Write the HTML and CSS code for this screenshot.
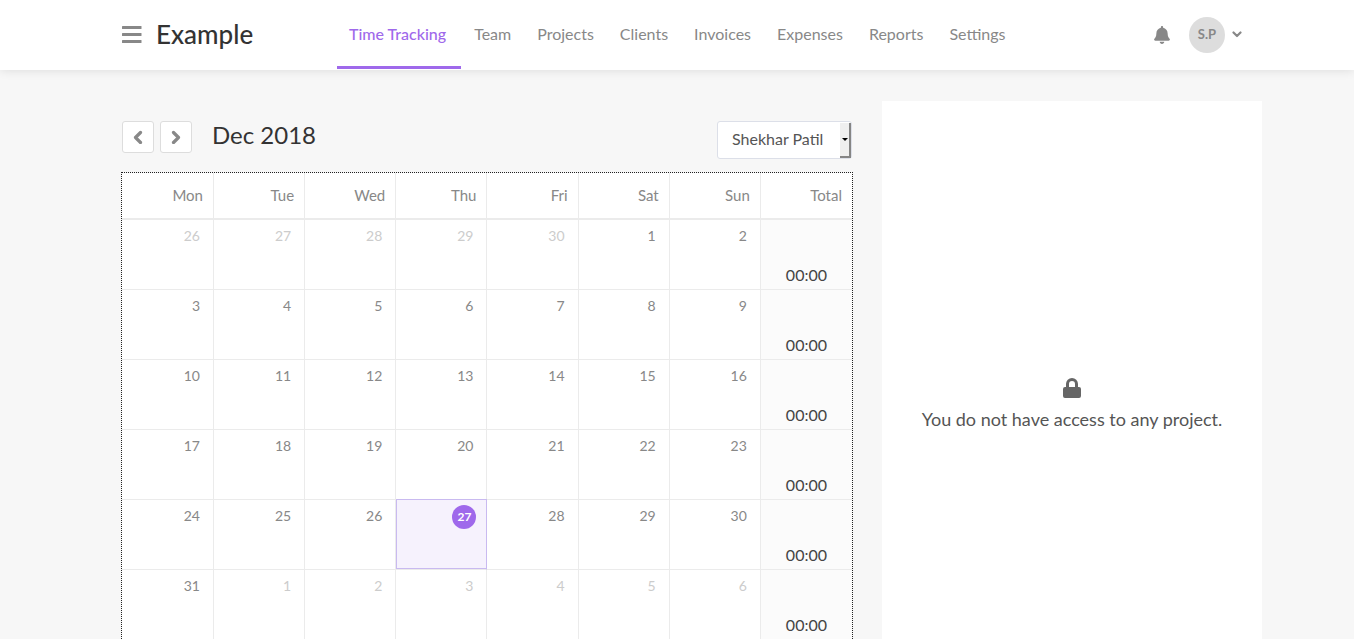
FILE: index.html
```html
<!DOCTYPE html>
<html lang="en">
<head>
<meta charset="utf-8">
<meta name="viewport" content="width=device-width, initial-scale=1">
<title>Time Tracking</title>
<link rel="stylesheet" href="styles.css">
</head>
<body>
<header class="topbar">
  <div class="container topbar-inner">
    <button class="icon-button menu-button" type="button" aria-label="Menu">
      <svg width="20" height="18" viewBox="0 0 20 18" fill="currentColor"><rect y="0" width="19.500" height="3" rx="0.5"/><rect y="7" width="19.500" height="3" rx="0.5"/><rect y="14" width="19.500" height="3" rx="0.5"/></svg>
    </button>
    <a class="brand" href="#">Example</a>
    <nav class="nav">
      <a class="nav-link active" href="#">Time Tracking</a>
      <a class="nav-link" href="#">Team</a>
      <a class="nav-link" href="#">Projects</a>
      <a class="nav-link" href="#">Clients</a>
      <a class="nav-link" href="#">Invoices</a>
      <a class="nav-link" href="#">Expenses</a>
      <a class="nav-link" href="#">Reports</a>
      <a class="nav-link" href="#">Settings</a>
    </nav>
    <button class="icon-button bell" type="button" aria-label="Notifications">
      <svg width="16" height="18" viewBox="0 0 448 512" fill="currentColor"><path d="M224 512c35.300 0 63.900-28.600 63.900-64H160.100c0 35.400 28.600 64 63.900 64zm215.400-149.700c-19.300-20.800-55.500-52-55.500-154.300 0-77.700-54.500-139.900-127.900-155.200V32c0-17.700-14.300-32-32-32s-32 14.300-32 32v20.800C118.600 68.100 64.100 130.300 64.100 208c0 102.300-36.200 133.500-55.500 154.300-6 6.500-8.700 14.200-8.600 21.700.1 16.400 13 32 32.100 32h383.800c19.100 0 32-15.600 32.100-32 .1-7.500-2.600-15.300-8.600-21.700z"/></svg>
    </button>
    <button class="icon-button profile" type="button" aria-label="Account">
      <span class="avatar">S.P</span>
      <svg width="10" height="8" viewBox="0 0 10 8" fill="none" stroke="currentColor" stroke-width="2.200" stroke-linecap="round" stroke-linejoin="round"><path d="M1.500 1.500 5 5 8.500 1.500"/></svg>
    </button>
  </div>
</header>
<main class="content">
  <div class="container columns">
    <section class="calendar-column">
      <div class="toolbar">
        <button class="step" type="button" aria-label="Previous month">
          <svg width="10" height="14" viewBox="0 0 10 14" fill="none" stroke="currentColor" stroke-width="3.200" stroke-linecap="round" stroke-linejoin="round"><path d="M7.500 2.500 2.500 7.500l5 5"/></svg>
        </button>
        <button class="step" type="button" aria-label="Next month">
          <svg width="10" height="14" viewBox="0 0 10 14" fill="none" stroke="currentColor" stroke-width="3.200" stroke-linecap="round" stroke-linejoin="round"><path d="M2.500 2.500l5 5-5 5"/></svg>
        </button>
        <h1 class="month">Dec 2018</h1>
        <div class="user-picker">
          <select class="user-select" aria-label="Team member"><option>Shekhar Patil</option></select>
          <span class="user-arrow" aria-hidden="true"></span>
        </div>
      </div>
      <table class="calendar">
        <thead>
          <tr><th class="first-day">Mon</th><th>Tue</th><th>Wed</th><th>Thu</th><th>Fri</th><th>Sat</th><th>Sun</th><th>Total</th></tr>
        </thead>
        <tbody>
          <tr><td class="other">26</td><td class="other">27</td><td class="other">28</td><td class="other">29</td><td class="other">30</td><td>1</td><td>2</td><td class="total">00:00</td></tr>
          <tr><td>3</td><td>4</td><td>5</td><td>6</td><td>7</td><td>8</td><td>9</td><td class="total">00:00</td></tr>
          <tr><td>10</td><td>11</td><td>12</td><td>13</td><td>14</td><td>15</td><td>16</td><td class="total">00:00</td></tr>
          <tr><td>17</td><td>18</td><td>19</td><td>20</td><td>21</td><td>22</td><td>23</td><td class="total">00:00</td></tr>
          <tr><td>24</td><td>25</td><td>26</td><td class="today"><span class="today-badge">27</span></td><td>28</td><td>29</td><td>30</td><td class="total">00:00</td></tr>
          <tr><td>31</td><td class="other">1</td><td class="other">2</td><td class="other">3</td><td class="other">4</td><td class="other">5</td><td class="other">6</td><td class="total">00:00</td></tr>
        </tbody>
      </table>
    </section>
    <aside class="panel">
      <svg width="18" height="20" viewBox="0 0 18 20" fill="currentColor"><path fill-rule="evenodd" d="M3 9V6a6 6 0 0 1 12 0v3h1a2 2 0 0 1 2 2v7a2 2 0 0 1-2 2H2a2 2 0 0 1-2-2v-7a2 2 0 0 1 2-2zm3 0h6V6a3 3 0 0 0-6 0z"/></svg>
      <p class="panel-text">You do not have access to any project.</p>
    </aside>
  </div>
</main>
</body>
</html>
```
FILE: styles.css
```css
* { box-sizing: border-box; }

body {
  margin: 0;
  height: 100vh;
  display: flex;
  flex-direction: column;
  background: #f7f7f7;
  color: #888;
  font: 16px/24px Lato, "Open Sans", sans-serif;
}

a { color: inherit; text-decoration: none; }
svg { display: block; flex: none; }

.container {
  width: 100%;
  max-width: 1170px;
  margin: 0 auto;
  padding-left: 30px;
}

.topbar {
  position: relative;
  flex: none;
  background: #fff;
  box-shadow: 0 0 10px rgba(0, 0, 0, 0.12);
}

.topbar-inner {
  display: flex;
  align-items: center;
  height: 70px;
  padding-right: 20px;
}

.icon-button {
  display: flex;
  align-items: center;
  padding: 0;
  border: 0;
  background: none;
  color: #888;
  font: inherit;
  cursor: pointer;
}

.brand {
  width: 181px;
  margin-left: 14px;
  padding-bottom: 2px;
  color: #333;
  font-size: 26px;
  font-weight: 500;
}

.nav { display: flex; align-self: stretch; }

.nav-link {
  display: flex;
  align-items: center;
  margin-bottom: 1px;
  padding: 1px 13px 0;
  border-bottom: 3px solid transparent;
}

.nav-link.active {
  padding: 1px 15px 0 12px;
  border-color: #9f69eb;
  color: #9f69eb;
  font-weight: 500;
}

.bell { margin-left: auto; }
.profile { gap: 7px; margin-left: 19px; }

.avatar {
  width: 36px;
  height: 36px;
  padding-bottom: 2px;
  border-radius: 50%;
  background: #ddd;
  font-size: 13px;
  font-weight: 700;
  line-height: 34px;
  text-align: center;
}

.content {
  flex: 1;
  min-height: 0;
  overflow-y: auto;
  scrollbar-width: none;
}

.columns {
  display: grid;
  grid-template-columns: minmax(0, 730fr) minmax(0, 380fr);
  gap: 30px;
  padding-top: 31px;
}

.calendar-column { padding-top: 20px; }

.toolbar {
  display: flex;
  align-items: flex-start;
  gap: 6px;
  margin-bottom: 14px;
}

.step {
  display: grid;
  place-items: center;
  width: 32px;
  height: 32px;
  padding: 0;
  border: 1px solid #ddd;
  border-radius: 3px;
  background: #fff;
  color: #888;
}

.month {
  margin: 0 auto 0 14px;
  color: #333;
  font-size: 24px;
  font-weight: 400;
  line-height: 28px;
}

.user-picker { position: relative; }

.user-select {
  display: block;
  width: 135px;
  height: 38px;
  padding: 0 14px 2px;
  border: 1px solid #dcdfe8;
  border-radius: 3px;
  appearance: none;
  background: #fff;
  color: #555;
  font: inherit;
}

.user-arrow {
  position: absolute;
  top: 2px;
  right: 1px;
  bottom: 1px;
  display: grid;
  place-items: center;
  width: 11px;
  border-right: 2px solid #858585;
  border-bottom: 2px solid #858585;
  background: #efefef;
  pointer-events: none;
}

.user-arrow::before {
  content: "";
  border: 3px solid transparent;
  border-top-color: #000;
  border-bottom: 0;
}

.calendar {
  width: 100%;
  table-layout: fixed;
  border-spacing: 0;
  outline: 1px dotted #222;
  background: #fff;
}

.calendar th,
.calendar td {
  border-right: 1px solid #ebebeb;
  text-align: right;
}

.calendar tr > :last-child { border-right: 0; }

.calendar th {
  height: 47px;
  padding: 0 10px 1px 0;
  border-bottom: 2px solid #ebebeb;
  font-size: 15px;
  font-weight: 400;
}

.calendar .first-day { width: 92px; }

.calendar td {
  height: 70px;
  padding: 4px 13px 0 0;
  border-bottom: 1px solid #ebebeb;
  font-size: 14px;
  vertical-align: top;
}

.calendar .other { color: #ccc; }

.calendar .total {
  padding: 0 0 2px;
  background: #fbfbfb;
  color: #444;
  font-size: 16px;
  text-align: center;
  vertical-align: bottom;
}

.calendar .today {
  padding-right: 10px;
  border-right-color: #c9baf0;
  background: #f6f2fd;
  box-shadow: 0 -1px 0 #c9baf0, inset 1px -1px 0 #c9baf0;
}

.today-badge {
  display: inline-block;
  width: 24px;
  height: 24px;
  border-radius: 50%;
  background: #9f69eb;
  color: #fff;
  font-size: 12px;
  font-weight: 700;
  text-align: center;
}

.panel {
  display: flex;
  flex-direction: column;
  align-items: center;
  justify-content: center;
  gap: 9px;
  min-height: 606px;
  background: #fff;
  color: #666;
}

.panel-text {
  margin: 0;
  color: #555;
  font-size: 18px;
}
```
